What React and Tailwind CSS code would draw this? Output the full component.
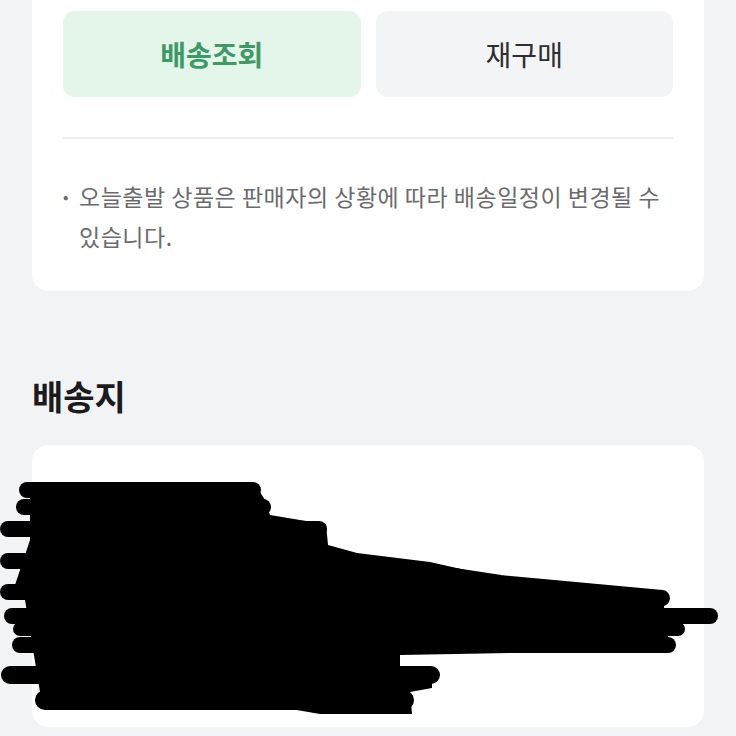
export default function App() {
  const font = { fontFamily: '"Noto Sans CJK KR", "Noto Sans", sans-serif' };
  return (
    <div className="relative w-[736px] h-[736px] overflow-hidden bg-[#f2f3f5]" style={font}>
      <div className="ml-[32px] w-[672px] rounded-b-[16px] bg-white px-[31px] pt-[11px] pb-[35px]">
        <div className="flex gap-[15px]">
          <div className="flex-1 h-[86px] rounded-[12px] bg-[#e4f5ea] flex items-center justify-center text-[28px] font-bold text-[#3d9a66]">
            배송조회
          </div>
          <div className="flex-1 h-[86px] rounded-[12px] bg-[#f3f4f6] flex items-center justify-center text-[28px] font-normal text-[#2e2e30]">
            재구매
          </div>
        </div>
        <div className="mt-[40px] h-[2px] bg-[#eeeff1]" />
        <div className="mt-[37px] flex text-[23px] leading-[40px] tracking-[0.5px] text-[#6b6b6d]">
          <span className="w-[16px] shrink-0 text-[16px] tracking-normal">•</span>
          <p className="break-keep">오늘출발 상품은 판매자의 상황에 따라 배송일정이 변경될 수 있습니다.</p>
        </div>
      </div>
      <h2 className="ml-[32px] mt-[85px] text-[34px] leading-[40px] font-bold text-[#1b1b1d]">배송지</h2>
      <div className="ml-[32px] mt-[29px] w-[672px] h-[282px] rounded-[16px] bg-white" />
      <svg className="absolute left-0 top-0" width="736" height="736" viewBox="0 0 736 736">
        <polygon
          fill="#000"
          points="30,484 255,484 265,500 270,515 300,520 326,524 328,545 357,553 430,562 505,579 662,592 670,650 400,655 400,668 432,668 432,688 410,692 412,714 320,714 220,697 40,692 25,600 15,585 30,540"
        />
        <g stroke="#000" strokeLinecap="round" fill="none">
          <line x1="27" y1="490" x2="253" y2="490" strokeWidth="16" />
          <line x1="24" y1="507" x2="263" y2="507" strokeWidth="16" />
          <line x1="8" y1="529" x2="319" y2="529" strokeWidth="16" />
          <line x1="8" y1="561" x2="352" y2="561" strokeWidth="16" />
          <polyline points="350,568 422,571 500,583 662,598" strokeWidth="16" />
          <line x1="12" y1="616" x2="710" y2="616" strokeWidth="16" />
          <line x1="20" y1="629" x2="678" y2="629" strokeWidth="14" />
          <line x1="20" y1="645" x2="668" y2="645" strokeWidth="16" />
          <line x1="10" y1="675" x2="431" y2="675" strokeWidth="18" />
          <line x1="45" y1="700" x2="404" y2="700" strokeWidth="20" />
          <line x1="8" y1="592" x2="200" y2="592" strokeWidth="16" />
        </g>
      </svg>
    </div>
  );
}
